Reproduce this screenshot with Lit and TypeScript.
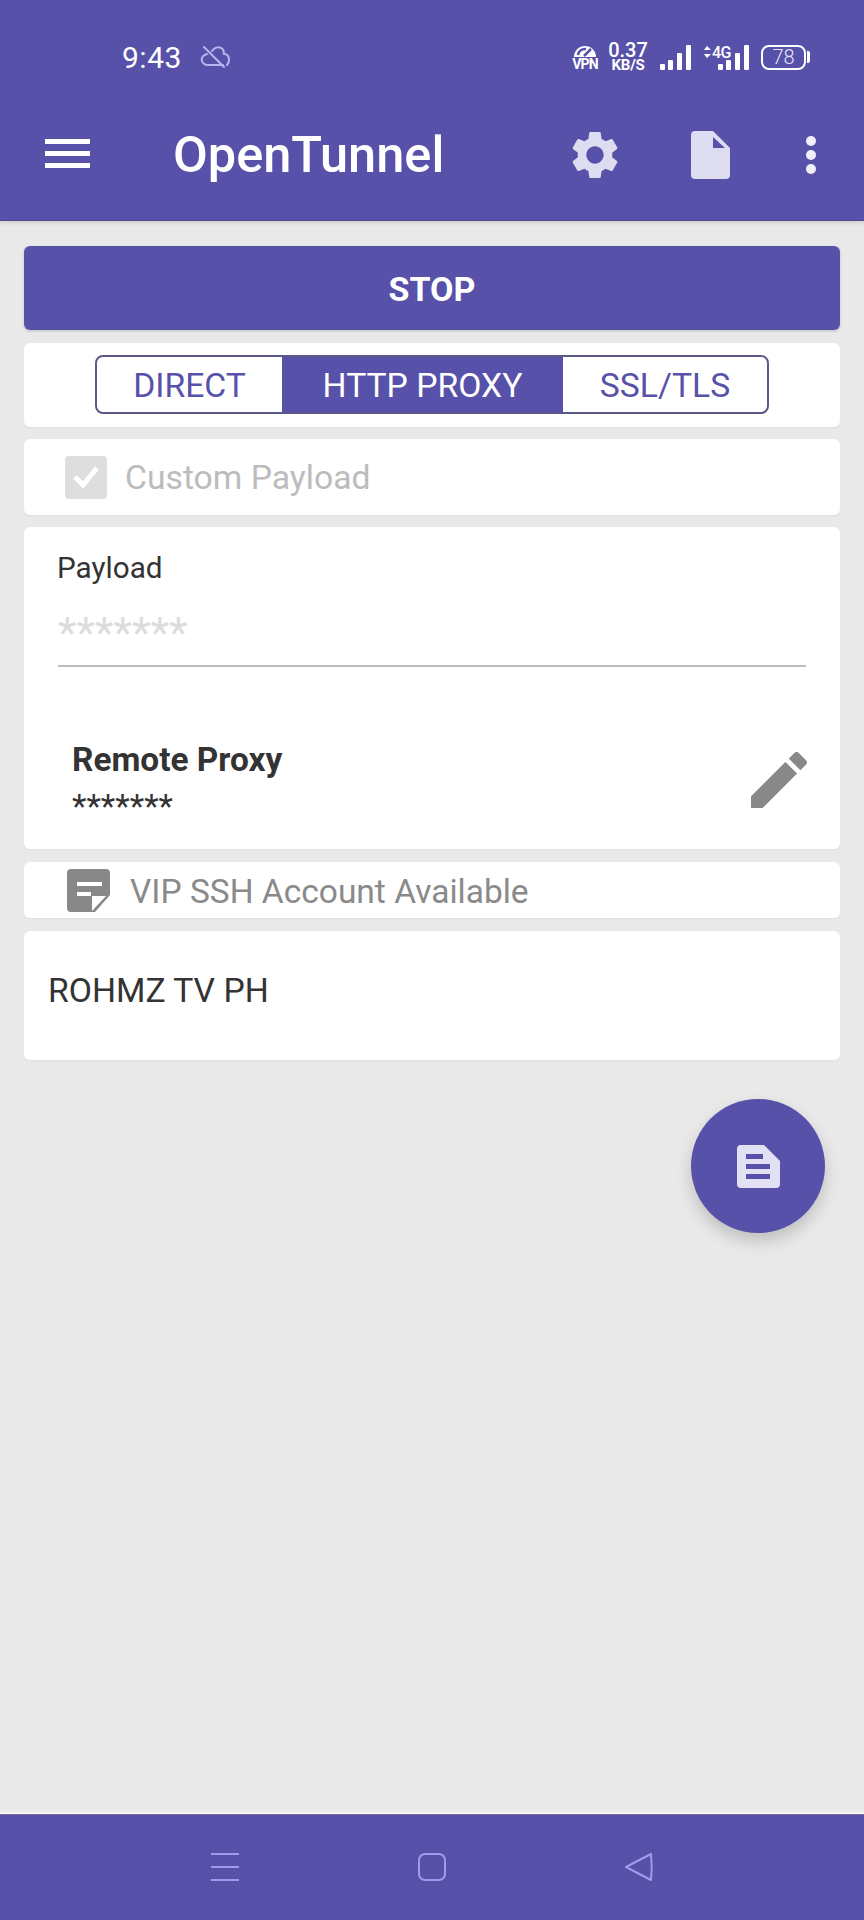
import { LitElement, css, html, svg } from "lit";
import { customElement, state } from "lit/decorators.js";

const signalBars = svg`
  <rect x="1" y="19" width="5" height="6" rx="1" />
  <rect x="9" y="15" width="5" height="10" rx="1" />
  <rect x="18" y="8" width="5" height="17" rx="1" />
  <rect x="27" y="0" width="5" height="25" rx="1" />
`;

@customElement("app-root")
class AppRoot extends LitElement {
  @state() private mode = "HTTP PROXY";

  static styles = css`
    :host {
      display: block;
      height: 1920px;
      background: #e9e9e9;
      font-family: Roboto, "Noto Sans", sans-serif;
      color: #333;
    }
    .screen {
      height: 100%;
      display: flex;
      flex-direction: column;
    }
    svg {
      display: block;
      flex: none;
    }
    .appbar {
      height: 221px;
      flex: none;
      background: #5851a9;
      border-bottom: 1px solid #4c4698;
      box-sizing: border-box;
      box-shadow: 0 2px 4px rgba(0, 0, 0, 0.12);
      color: #fff;
    }
    .status {
      height: 114px;
      padding: 0 54px 0 122px;
      display: flex;
      align-items: center;
    }
    .time {
      font-size: 30px;
      font-weight: 400;
      width: 78px;
      letter-spacing: 0.5px;
    }
    .cloud {
      fill: none;
      stroke: #b9b4f0;
      stroke-width: 2;
      stroke-linecap: round;
    }
    .status-right {
      margin-left: auto;
      display: flex;
      align-items: center;
    }
    .vpn {
      width: 24px;
      margin-right: 11px;
      display: flex;
      flex-direction: column;
      align-items: center;
      font-size: 14px;
      font-weight: 700;
      line-height: 12px;
      letter-spacing: -0.8px;
    }
    .speed {
      width: 40px;
      margin-right: 11px;
      text-align: center;
    }
    .speed b {
      display: block;
      font-size: 20px;
      line-height: 17px;
      font-weight: 500;
    }
    .speed span {
      display: block;
      font-size: 15px;
      line-height: 13px;
      font-weight: 700;
      letter-spacing: -0.2px;
    }
    .bars {
      fill: #fff;
    }
    .bars text {
      font-size: 16px;
      font-weight: 500;
      letter-spacing: -0.5px;
    }
    .signal {
      margin-right: 10px;
    }
    .signal2 {
      margin: 0 11px 4px 0;
    }
    .battery {
      display: flex;
      align-items: center;
    }
    .battery-body {
      width: 45px;
      height: 25px;
      box-sizing: border-box;
      border: 2px solid #fff;
      border-radius: 8px;
      display: flex;
      align-items: center;
      justify-content: center;
      font-size: 20px;
      font-weight: 300;
      color: #e4e2f8;
    }
    .battery-nub {
      width: 3px;
      height: 12px;
      margin-left: 1px;
      border-radius: 0 2px 2px 0;
      background: #fff;
    }
    .toolbar {
      height: 106px;
      padding-left: 45px;
      display: flex;
      align-items: flex-start;
    }
    .burger {
      width: 45px;
      margin-top: 25px;
      display: flex;
      flex-direction: column;
      gap: 7px;
    }
    .burger span {
      height: 5px;
      background: #fff;
    }
    .title {
      margin: 10px 0 0 83px;
      width: 399px;
      font-size: 50.5px;
      line-height: 62px;
      font-weight: 500;
    }
    .tool-icon {
      fill: #dddcf0;
    }
    .gear {
      margin-top: 17px;
    }
    .file {
      margin: 17px 0 0 73px;
    }
    .dots {
      margin: 22px 0 0 76px;
      display: flex;
      flex-direction: column;
      gap: 4px;
    }
    .dots span {
      width: 10px;
      height: 10px;
      border-radius: 50%;
      background: #f1f0fa;
    }
    main {
      flex: 1;
      position: relative;
      padding: 25px 24px 0;
      display: flex;
      flex-direction: column;
      gap: 12px;
    }
    .card {
      background: #fff;
      border-radius: 6px;
      box-shadow: 0 1px 2px rgba(0, 0, 0, 0.04);
      box-sizing: border-box;
    }
    .stop {
      height: 84px;
      border: 0;
      padding: 2px 0 0;
      border-radius: 6px;
      background: #5851a9;
      color: #fff;
      font: 700 34px Roboto, sans-serif;
      box-shadow: 0 1px 3px rgba(0, 0, 0, 0.18);
    }
    .modes {
      height: 84px;
      margin-top: 1px;
      padding-bottom: 2px;
      display: flex;
      align-items: center;
      justify-content: center;
    }
    .segments {
      display: grid;
      grid-template-columns: 185px 281px 204px;
      height: 59px;
      box-sizing: border-box;
      border: 2px solid #5b5a86;
      border-radius: 8px;
      overflow: hidden;
    }
    .segments span {
      display: flex;
      align-items: center;
      justify-content: center;
      padding-top: 3px;
      font-size: 33.7px;
      color: #5851a9;
    }
    .segments span.on {
      background: #5851a9;
      color: #fff;
    }
    .custom {
      height: 76px;
      padding-left: 41px;
      display: flex;
      align-items: center;
      gap: 18px;
      font-size: 33.7px;
      color: #bcbcbc;
    }
    .checkbox {
      width: 42px;
      height: 43px;
      border-radius: 4px;
      background: #dedede;
      display: flex;
      align-items: center;
      justify-content: center;
    }
    .checkbox svg {
      fill: none;
      stroke: #fff;
      stroke-width: 5;
    }
    .payload {
      height: 322px;
      padding: 23px 34px 0;
    }
    .label {
      margin-left: -1px;
      font-size: 29.7px;
      line-height: 36px;
    }
    .masked {
      margin-top: 26px;
      padding-bottom: 13px;
      border-bottom: 2px solid #bcbcbc;
      font-size: 43px;
      line-height: 40px;
      color: #dcdcdc;
    }
    .remote {
      margin-top: 71px;
      padding-left: 14px;
      display: flex;
      justify-content: space-between;
      align-items: flex-start;
    }
    .remote h3 {
      margin: 0;
      font-size: 33.4px;
      line-height: 44px;
      font-weight: 700;
    }
    .remote p {
      margin: 0;
      font-size: 33.5px;
      line-height: 50px;
      color: #333;
    }
    .pencil {
      fill: #888;
      margin: 14px -1px 0 0;
    }
    .vip {
      height: 56px;
      margin-top: 1px;
      padding-left: 43px;
      display: flex;
      align-items: center;
      gap: 20px;
      font-size: 33.5px;
      color: #8a8a8a;
    }
    .vip span {
      padding-top: 2px;
    }
    .log {
      height: 129px;
      margin-top: 1px;
      padding: 42px 24px 0;
      font-size: 33.7px;
      line-height: 36px;
      color: #333;
    }
    .fab {
      position: absolute;
      top: 878px;
      right: 39px;
      width: 134px;
      height: 134px;
      border-radius: 50%;
      background: #5851a9;
      box-shadow: 0 8px 16px rgba(0, 0, 0, 0.18);
      display: flex;
      align-items: center;
      justify-content: center;
    }
    .navbar {
      height: 106px;
      flex: none;
      box-sizing: border-box;
      background: #5851a9;
      border-top: 1px solid #77709f;
      box-shadow: 0 -2px 0 #f6f6f6;
      display: flex;
      justify-content: center;
      align-items: flex-start;
      padding-top: 37px;
      gap: 177px;
    }
    .navbar svg {
      fill: none;
      stroke: #a09bea;
      stroke-width: 2;
      stroke-linejoin: round;
    }
  `;

  render() {
    const modes = ["DIRECT", "HTTP PROXY", "SSL/TLS"];
    return html`
      <div class="screen">
        <header class="appbar">
          <div class="status">
            <span class="time">9:43</span>
            <svg class="cloud" width="30" height="23" viewBox="0 0 30 23">
              <path d="M7 8C3 9 1 12 2 15c1 3 4 4 6 4h15" />
              <path d="M12 5c2-3 6-5 9-3 3 1 3 4 3 6 3 0 5 2 5 6 0 2-1 4-2 5" />
              <path d="M4 1l20 20" />
            </svg>
            <div class="status-right">
              <div class="vpn">
                <svg width="24" height="14" viewBox="0 0 24 14">
                  <path fill="#fff" d="M1 13a11 11 0 0 1 22 0z" />
                  <path
                    fill="none"
                    stroke="#5851a9"
                    stroke-width="2.5"
                    d="M5 11a7 7 0 0 1 8-6M11 12l7-7"
                  />
                </svg>
                <span>VPN</span>
              </div>
              <div class="speed"><b>0.37</b><span>KB/S</span></div>
              <svg class="bars signal" width="33" height="25" viewBox="0 0 33 25">
                ${signalBars}
              </svg>
              <svg class="bars signal2" width="48" height="29" viewBox="-15 -4 48 29">
                <path d="M-10 1l4 4h-7zM-10 13l4-4h-7z" />
                <text x="-5" y="13">4G</text>
                ${signalBars}
              </svg>
              <div class="battery">
                <div class="battery-body">78</div>
                <div class="battery-nub"></div>
              </div>
            </div>
          </div>
          <div class="toolbar">
            <div class="burger"><span></span><span></span><span></span></div>
            <div class="title">OpenTunnel</div>
            <svg class="tool-icon gear" width="46" height="48" viewBox="2.6 2 18.8 20">
              <path
                d="M19.14 12.94c.04-.3.06-.61.06-.94 0-.32-.02-.64-.07-.94l2.03-1.58c.18-.14.23-.41.12-.61l-1.92-3.32c-.12-.22-.37-.29-.59-.22l-2.39.96c-.5-.38-1.03-.7-1.62-.94l-.36-2.54c-.04-.24-.24-.41-.48-.41h-3.84c-.24 0-.43.17-.47.41l-.36 2.54c-.59.24-1.13.57-1.62.94l-2.39-.96c-.22-.08-.47 0-.59.22L2.74 8.87c-.12.21-.08.47.12.61l2.03 1.58c-.05.3-.09.63-.09.94s.02.64.07.94l-2.03 1.58c-.18.14-.23.41-.12.61l1.92 3.32c.12.22.37.29.59.22l2.39-.96c.5.38 1.03.7 1.62.94l.36 2.54c.05.24.24.41.48.41h3.84c.24 0 .44-.17.47-.41l.36-2.54c.59-.24 1.13-.56 1.62-.94l2.39.96c.22.08.47 0 .59-.22l1.92-3.32c.12-.22.07-.47-.12-.61l-2.01-1.58zM12 15.6c-1.98 0-3.6-1.62-3.6-3.6s1.62-3.6 3.6-3.6 3.6 1.62 3.6 3.6-1.62 3.6-3.6 3.6z"
              />
            </svg>
            <svg class="tool-icon file" width="39" height="48" viewBox="0 0 39 48">
              <path
                fill-rule="evenodd"
                d="M4 0h18l17 17v27a4 4 0 0 1-4 4H4a4 4 0 0 1-4-4V4a4 4 0 0 1 4-4zM22 6v11h12z"
              />
            </svg>
            <div class="dots"><span></span><span></span><span></span></div>
          </div>
        </header>

        <main>
          <button class="stop">STOP</button>

          <section class="card modes">
            <div class="segments">
              ${modes.map(
                (m) => html`<span class=${m === this.mode ? "on" : ""}>${m}</span>`
              )}
            </div>
          </section>

          <section class="card custom">
            <div class="checkbox">
              <svg width="30" height="26" viewBox="0 0 30 26"><path d="M4 13l8 8L26 4" /></svg>
            </div>
            <span>Custom Payload</span>
          </section>

          <section class="card payload">
            <div class="label">Payload</div>
            <div class="masked">*******</div>
            <div class="remote">
              <div>
                <h3>Remote Proxy</h3>
                <p>*******</p>
              </div>
              <svg class="pencil" width="56" height="56" viewBox="3 3 18 18">
                <path
                  d="M3 17.25V21h3.75L17.81 9.94l-3.75-3.75L3 17.25zM20.71 7.04c.39-.39.39-1.02 0-1.41l-2.34-2.34c-.39-.39-1.02-.39-1.41 0l-1.83 1.83 3.75 3.75 1.83-1.83z"
                />
              </svg>
            </div>
          </section>

          <section class="card vip">
            <svg width="43" height="43" viewBox="0 0 43 43" fill="#888">
              <path
                fill-rule="evenodd"
                d="M4 0h35a4 4 0 0 1 4 4v22L28 43H4a4 4 0 0 1-4-4V4a4 4 0 0 1 4-4zM10 13v4h25v-4zM10 23v4h14v-4zM25 27v15l14-15z"
              />
            </svg>
            <span>VIP SSH Account Available</span>
          </section>

          <section class="card log">ROHMZ TV PH</section>

          <div class="fab">
            <svg width="43" height="43" viewBox="0 0 43 43">
              <path
                fill="#e2e0f5"
                fill-rule="evenodd"
                d="M4 0h23l16 16v23a4 4 0 0 1-4 4H4a4 4 0 0 1-4-4V4a4 4 0 0 1 4-4zM9 9v5h17V9zM9 19v5h24v-5zM9 29v5h24v-5z"
              />
            </svg>
          </div>
        </main>

        <nav class="navbar">
          <svg width="30" height="30" viewBox="0 0 30 30">
            <path d="M1 2h28M1 15h28M1 28h28" />
          </svg>
          <svg width="30" height="30" viewBox="0 0 30 30">
            <rect x="2" y="2" width="26" height="26" rx="6" />
          </svg>
          <svg width="30" height="30" viewBox="0 0 30 30">
            <path d="M2 15L27 2c1 9 1 17 0 26z" />
          </svg>
        </nav>
      </div>
    `;
  }
}

declare global {
  interface HTMLElementTagNameMap {
    "app-root": AppRoot;
  }
}
